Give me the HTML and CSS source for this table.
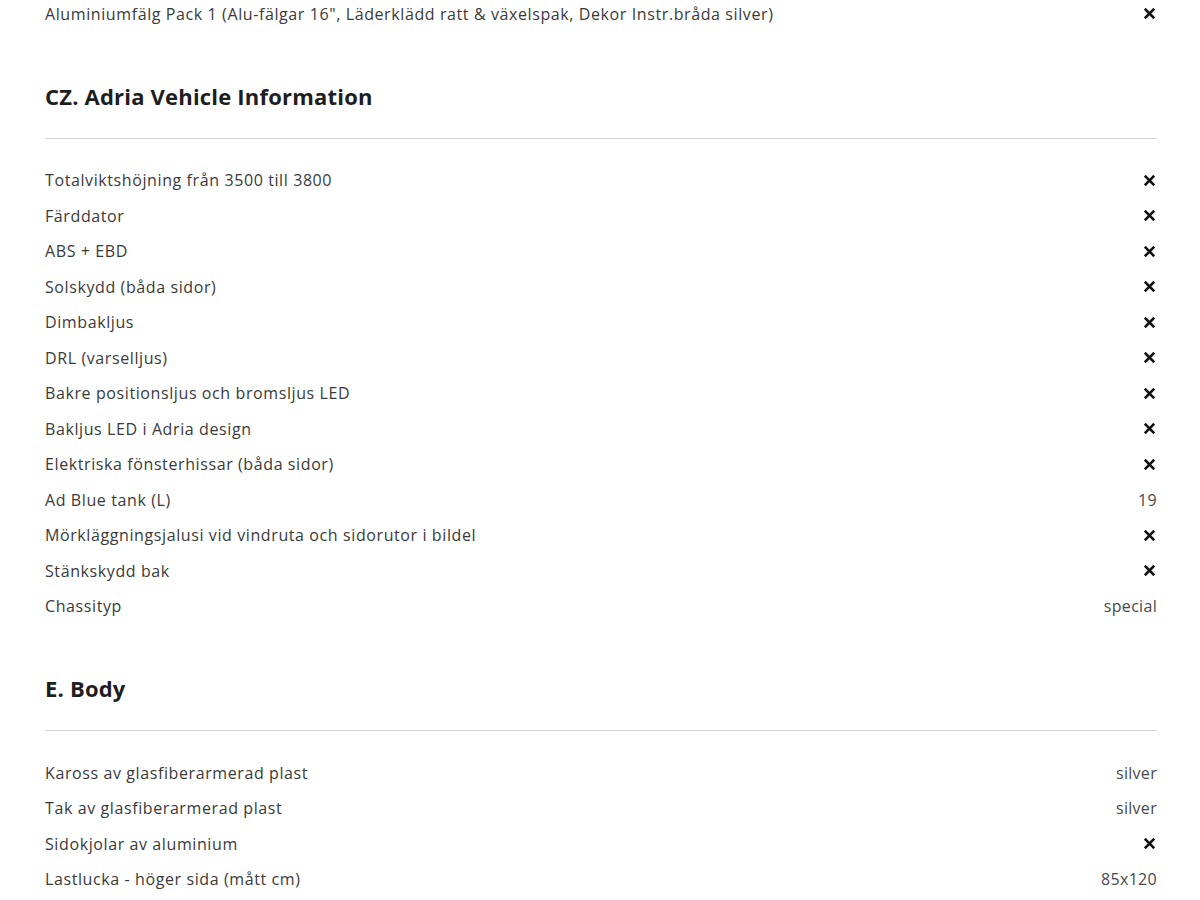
FILE: index.html
```html
<!DOCTYPE html>
<html>
  <head>
    <meta charset="utf-8">
    <title>Adria – utrustning</title>
    <link rel="stylesheet" href="styles.css">
  </head>
  <body>
    <main class="specs">
      <ul class="spec-list first">
        <li><span>Aluminiumfälg Pack 1 (Alu-fälgar 16", Läderklädd ratt &amp; växelspak, Dekor Instr.bråda silver)</span><span class="check"><svg viewBox="0 0 10 10"><path d="M1.5 1.5l7 7M8.5 1.5l-7 7"/></svg></span></li>
      </ul>

      <section class="group">
        <h3>CZ. Adria Vehicle Information</h3>
        <hr>
        <ul class="spec-list">
          <li><span>Totalviktshöjning från 3500 till 3800</span><span class="check"><svg viewBox="0 0 10 10"><path d="M1.5 1.5l7 7M8.5 1.5l-7 7"/></svg></span></li>
          <li><span>Färddator</span><span class="check"><svg viewBox="0 0 10 10"><path d="M1.5 1.5l7 7M8.5 1.5l-7 7"/></svg></span></li>
          <li><span>ABS + EBD</span><span class="check"><svg viewBox="0 0 10 10"><path d="M1.5 1.5l7 7M8.5 1.5l-7 7"/></svg></span></li>
          <li><span>Solskydd (båda sidor)</span><span class="check"><svg viewBox="0 0 10 10"><path d="M1.5 1.5l7 7M8.5 1.5l-7 7"/></svg></span></li>
          <li><span>Dimbakljus</span><span class="check"><svg viewBox="0 0 10 10"><path d="M1.5 1.5l7 7M8.5 1.5l-7 7"/></svg></span></li>
          <li><span>DRL (varselljus)</span><span class="check"><svg viewBox="0 0 10 10"><path d="M1.5 1.5l7 7M8.5 1.5l-7 7"/></svg></span></li>
          <li><span>Bakre positionsljus och bromsljus LED</span><span class="check"><svg viewBox="0 0 10 10"><path d="M1.5 1.5l7 7M8.5 1.5l-7 7"/></svg></span></li>
          <li><span>Bakljus LED i Adria design</span><span class="check"><svg viewBox="0 0 10 10"><path d="M1.5 1.5l7 7M8.5 1.5l-7 7"/></svg></span></li>
          <li><span>Elektriska fönsterhissar (båda sidor)</span><span class="check"><svg viewBox="0 0 10 10"><path d="M1.5 1.5l7 7M8.5 1.5l-7 7"/></svg></span></li>
          <li><span>Ad Blue tank (L)</span><span class="value">19</span></li>
          <li><span>Mörkläggningsjalusi vid vindruta och sidorutor i bildel</span><span class="check"><svg viewBox="0 0 10 10"><path d="M1.5 1.5l7 7M8.5 1.5l-7 7"/></svg></span></li>
          <li><span>Stänkskydd bak</span><span class="check"><svg viewBox="0 0 10 10"><path d="M1.5 1.5l7 7M8.5 1.5l-7 7"/></svg></span></li>
          <li><span>Chassityp</span><span class="value">special</span></li>
        </ul>
      </section>

      <section class="group">
        <h3>E. Body</h3>
        <hr>
        <ul class="spec-list">
          <li><span>Kaross av glasfiberarmerad plast</span><span class="value">silver</span></li>
          <li><span>Tak av glasfiberarmerad plast</span><span class="value">silver</span></li>
          <li><span>Sidokjolar av aluminium</span><span class="check"><svg viewBox="0 0 10 10"><path d="M1.5 1.5l7 7M8.5 1.5l-7 7"/></svg></span></li>
          <li><span>Lastlucka - höger sida (mått cm)</span><span class="value">85x120</span></li>
        </ul>
      </section>
    </main>
  </body>
</html>
```

FILE: styles.css
```css
body, html {
  margin: 0;
  background: #fff;
  overflow: hidden;
}
body {
  font-family: "Open Sans", Lato, sans-serif;
  color: #3a3a3a;
}
.specs {
  padding: 0 43px 0 45px;
}
.spec-list {
  list-style: none;
  margin: 0;
  padding: 0;
}
.spec-list.first {
  margin-top: -4px;
}
.spec-list li {
  display: flex;
  justify-content: space-between;
  align-items: center;
  height: 35.5px;
  font-size: 16px;
  letter-spacing: 0.6px;
}
.check {
  display: flex;
  padding-right: 2px;
}
.check svg {
  width: 11px;
  height: 11px;
  stroke: #111;
  stroke-width: 2.4;
  stroke-linecap: square;
  fill: none;
}
.value {
  color: #4a4a4a;
  letter-spacing: 0.3px;
}
.group h3 {
  margin: 49px 0 0;
  font-size: 22px;
  line-height: 30px;
  font-weight: 700;
  color: #1e1e1e;
  letter-spacing: 0.2px;
}
.group hr {
  margin: 27px 0 24px;
  border: none;
  border-top: 1px solid #d8d8d8;
}
```
